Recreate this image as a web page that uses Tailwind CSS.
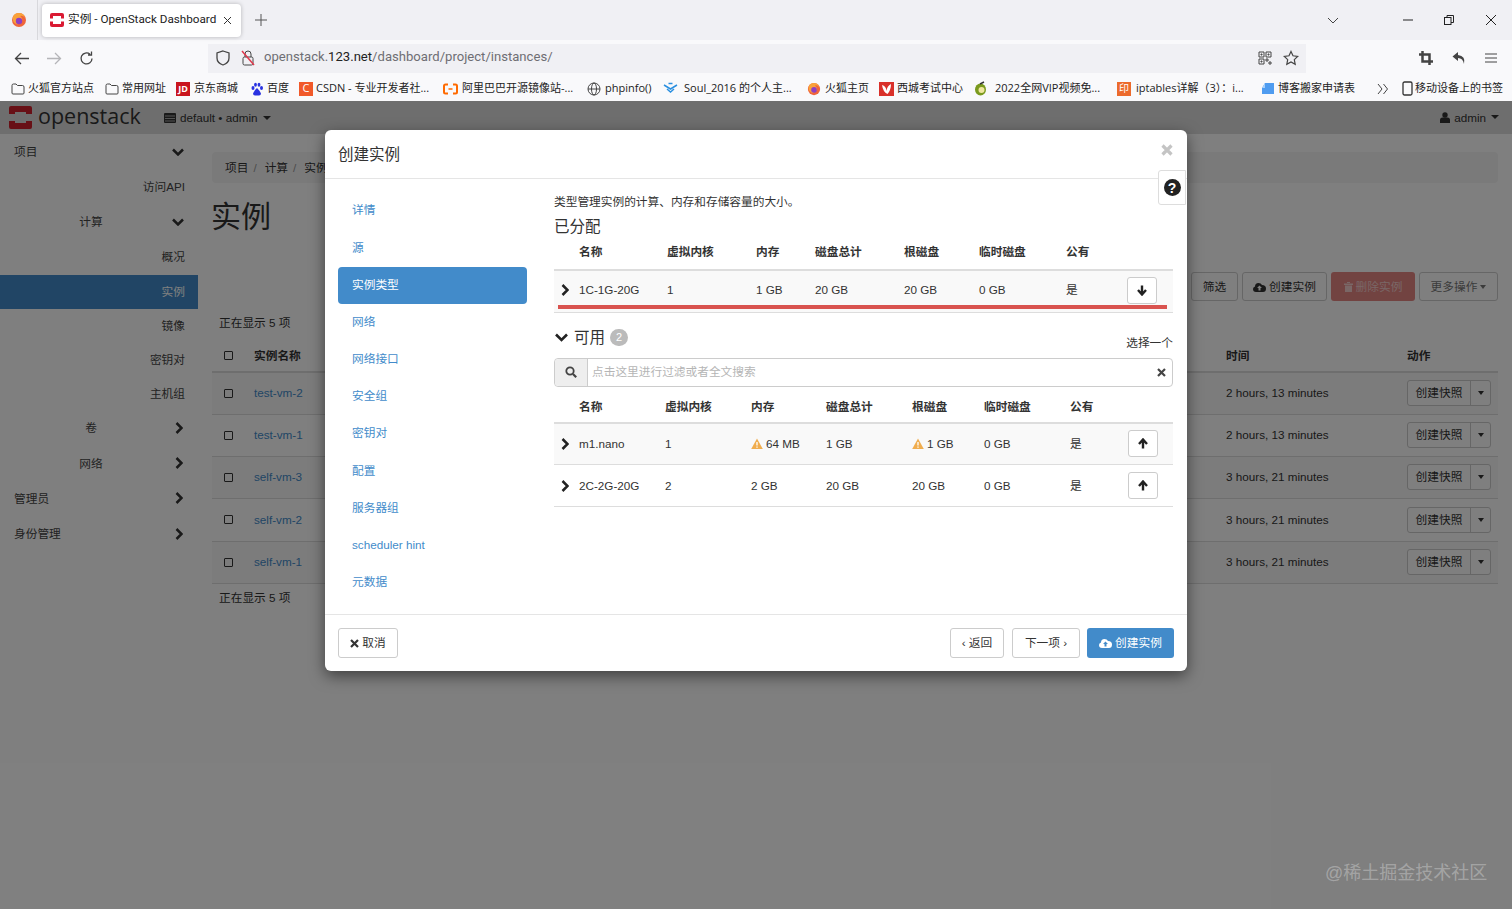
<!DOCTYPE html>
<html lang="zh">
<head>
<meta charset="UTF-8">
<title>实例 - OpenStack Dashboard</title>
<script src="https://cdn.jsdelivr.net/npm/@tailwindcss/browser@4"></script>
</head>
<body class="relative h-[909px] w-[1512px] overflow-hidden bg-white font-['Liberation_Sans','Noto_Sans_CJK_SC',sans-serif] text-[11.700px] text-[#333]">

<!-- browser: tab strip -->
<div class="flex h-[40px] items-center bg-[#f0f0f4] font-['Roboto','Noto_Sans_CJK_SC',sans-serif] text-[#222]">
  <div class="flex w-[38px] justify-center border-r border-[#d8d8dc] h-[40px] items-center">
    <svg width="16" height="16" viewBox="0 0 16 16"><circle cx="8" cy="8" r="7" fill="#f0653a"/><path d="M2 5q1-4 6-4 5 0 6 5-2-3-5-2 3 2 2 5-2 4-6 3-4-2-3-7z" fill="#f9a23a"/><circle cx="8" cy="9" r="3.2" fill="#8f3fc0"/></svg>
  </div>
  <div class="ml-[4px] flex h-[33px] w-[199px] items-center rounded-[4px] bg-white pl-[7px] shadow-[0_0_4px_rgba(0,0,0,0.25)]">
    <svg width="16" height="16" viewBox="0 0 16 16"><rect x="1" y="1" width="14" height="14" rx="2" fill="#da1a32"/><rect x="4" y="4" width="8" height="8" fill="#fff"/><rect x="0" y="6.5" width="5" height="3" fill="#fff"/><rect x="11" y="6.5" width="5" height="3" fill="#fff"/></svg>
    <span class="ml-[3px] w-[150px] whitespace-nowrap text-[11.700px]">实例 - OpenStack Dashboard</span>
    <svg class="ml-[5px]" width="9" height="9" viewBox="0 0 9 9"><path d="M1 1l7 7M8 1L1 8" stroke="#333" fill="none"/></svg>
  </div>
  <svg class="ml-[14px]" width="12" height="12" viewBox="0 0 12 12"><path d="M6 0v12M0 6h12" stroke="#555" fill="none"/></svg>
  <div class="flex-1"></div>
  <svg class="mr-[64px]" width="12" height="7" viewBox="0 0 12 7"><path d="M1 1l5 5 5-5" stroke="#444" fill="none"/></svg>
  <svg class="mr-[31px]" width="10" height="2" viewBox="0 0 10 2"><path d="M0 1h10" stroke="#222" fill="none"/></svg>
  <svg class="mr-[32px]" width="10" height="10" viewBox="0 0 10 10"><rect x="0.5" y="2.5" width="6.5" height="7" stroke="#222" fill="none"/><path d="M3 2.5v-2h6.5v7H7" stroke="#222" fill="none"/></svg>
  <svg class="mr-[16px]" width="10" height="10" viewBox="0 0 10 10"><path d="M0 0l10 10M10 0L0 10" stroke="#222" fill="none"/></svg>
</div>

<!-- browser: nav bar -->
<div class="flex h-[36px] items-center bg-[#f9f9fb] font-['Roboto','Noto_Sans_CJK_SC',sans-serif]">
  <svg class="ml-[14px]" width="15" height="13" viewBox="0 0 15 13"><path d="M7 1L1.5 6.500 7 12M2 6.500h13" stroke="#444" stroke-width="1.300" fill="none"/></svg>
  <svg class="ml-[18px]" width="15" height="13" viewBox="0 0 15 13"><path d="M8 1l5.500 5.500L8 12M13 6.500H0" stroke="#b5b5b8" stroke-width="1.300" fill="none"/></svg>
  <svg class="ml-[17px]" width="15" height="15" viewBox="0 0 15 15"><path d="M13 7.500a5.500 5.500 0 1 1-2-4.300M12.500 0.500v3.500H9" stroke="#444" stroke-width="1.300" fill="none"/></svg>
  <div class="ml-[114px] flex h-[29px] w-[1098px] items-center bg-[#f0f0f4]">
    <svg class="ml-[8px]" width="14" height="16" viewBox="0 0 14 16"><path d="M7 1l6 2v5q0 5-6 7-6-2-6-7V3z" stroke="#444" stroke-width="1.300" fill="none"/></svg>
    <svg class="ml-[11px]" width="14" height="16" viewBox="0 0 14 16"><rect x="2" y="7" width="10" height="8" rx="1.500" stroke="#444" fill="none"/><path d="M4 7V4a3 3 0 0 1 6 0v3" stroke="#444" fill="none"/><path d="M1 1l12 14" stroke="#e0384c" stroke-width="1.500"/></svg>
    <span class="mb-[2px] ml-[9px] text-[13.100px] text-[#6e6e73]">openstack.<span class="text-[#222]">123.net</span>/dashboard/project/instances/</span>
    <div class="flex-1"></div>
    <svg width="14" height="14" viewBox="0 0 14 14"><path d="M1 1h5v5H1zM8 1h5v5H8zM1 8h5v5H1zM8 8h2v2H8zM11 11h2v2h-2zM3 3h1v1H3zM10 3h1v1h-1zM3 10h1v1H3z" stroke="#444" fill="none"/></svg>
    <svg class="ml-[11px] mr-[7px]" width="16" height="16" viewBox="0 0 16 16"><path d="M8 1.500l2 4.300 4.700.6-3.400 3.200.9 4.700L8 11.900l-4.200 2.400.9-4.700L1.300 6.400 6 5.800z" stroke="#444" stroke-width="1.200" fill="none"/></svg>
  </div>
  <svg class="ml-[113px]" width="14" height="14" viewBox="0 0 14 14"><path d="M3.500 0v10.500H14M0 3.500h10.500V14" stroke="#444" stroke-width="2.500" fill="none"/></svg>
  <svg class="ml-[19px]" width="14" height="14" viewBox="0 0 14 14"><path d="M6 1L0.500 5.500 6 10V7q5 0 6 6 2-8-6-9z" fill="#444"/></svg>
  <svg class="ml-[19px]" width="12" height="10" viewBox="0 0 12 10"><path d="M0 1h12M0 5h12M0 9h12" stroke="#444" fill="none"/></svg>
</div>

<!-- browser: bookmarks -->
<div class="flex h-[25px] items-center bg-[#f9f9fb] pl-[11px] font-['Open_Sans','Noto_Sans_CJK_SC',sans-serif] text-[11px] whitespace-nowrap text-[#222]">
  <div class="flex w-[94px] items-center gap-[3px]"><svg width="14" height="12" viewBox="0 0 14 12"><path d="M1 2.500q0-1.500 1.500-1.500H5l1.500 1.500h5q1.500 0 1.500 1.500v6q0 1-1 1H2q-1 0-1-1z" stroke="#444" fill="none"/></svg>火狐官方站点</div>
  <div class="flex w-[71px] items-center gap-[3px]"><svg width="14" height="12" viewBox="0 0 14 12"><path d="M1 2.500q0-1.500 1.500-1.500H5l1.500 1.500h5q1.500 0 1.500 1.500v6q0 1-1 1H2q-1 0-1-1z" stroke="#444" fill="none"/></svg>常用网址</div>
  <div class="flex w-[74px] items-center gap-[4px]"><span class="flex h-[14px] w-[14px] items-center justify-center bg-[#c9151e] text-[9px] font-bold text-white">JD</span>京东商城</div>
  <div class="flex w-[49px] items-center gap-[3px]"><svg width="14" height="14" viewBox="0 0 14 14" fill="#2932e1"><ellipse cx="3" cy="6" rx="1.500" ry="2"/><ellipse cx="5.500" cy="2.800" rx="1.400" ry="2"/><ellipse cx="9" cy="2.800" rx="1.400" ry="2"/><ellipse cx="11.500" cy="6" rx="1.500" ry="2"/><path d="M7 6q3 3 4 5.500 0 2-2 2H5q-2 0-2-2Q4 9 7 6z"/></svg>百度</div>
  <div class="flex w-[144px] items-center gap-[3px]"><span class="flex h-[14px] w-[14px] items-center justify-center bg-[#f1592a] text-[11px] text-white">C</span>CSDN - 专业开发者社...</div>
  <div class="flex w-[144px] items-center gap-[4px]"><svg width="15" height="12" viewBox="0 0 15 12"><path d="M5 1.500H2.500Q1 1.500 1 3v6q0 1.500 1.500 1.500H5M10 1.500h2.500Q14 1.500 14 3v6q0 1.500-1.500 1.500H10" stroke="#ff6a00" stroke-width="2" fill="none"/><path d="M5.500 6h4" stroke="#ff6a00" stroke-width="1.500"/></svg>阿里巴巴开源镜像站-...</div>
  <div class="flex w-[76px] items-center gap-[4px]"><svg width="14" height="14" viewBox="0 0 14 14" stroke="#444" fill="none"><circle cx="7" cy="7" r="6"/><ellipse cx="7" cy="7" rx="2.500" ry="6"/><path d="M1 7h12"/></svg>phpinfo()</div>
  <div class="flex w-[144px] items-center gap-[6px]"><svg width="15" height="13" viewBox="0 0 15 13" fill="none" stroke="#2a8fe0" stroke-width="1.500"><path d="M1 3l6.500 4L14 3"/><path d="M4 7l3.500 3L11 7"/><path d="M5.500 1.500h4"/></svg>Soul_2016 的个人主...</div>
  <div class="flex w-[72px] items-center gap-[4px]"><svg width="14" height="14" viewBox="0 0 16 16"><circle cx="8" cy="8" r="7" fill="#f0653a"/><path d="M2 5q1-4 6-4 5 0 6 5-2-3-5-2 3 2 2 5-2 4-6 3-4-2-3-7z" fill="#f9a23a"/><circle cx="8" cy="9" r="3.200" fill="#8f3fc0"/></svg>火狐主页</div>
  <div class="flex w-[94px] items-center gap-[3px]"><svg width="15" height="14" viewBox="0 0 15 14"><rect width="15" height="14" fill="#d9302a"/><path d="M3 3q4 1 4.500 6Q8 4 12 2q0 6-3.500 10Q4 10 3 3z" fill="#fff"/></svg>西城考试中心</div>
  <div class="flex w-[144px] items-center gap-[7px]"><svg width="15" height="15" viewBox="0 0 15 15"><ellipse cx="7.500" cy="8.500" rx="5.500" ry="6" fill="#7a9a1e"/><circle cx="8.500" cy="9" r="3" fill="#f0e6a0"/><path d="M7 3l4-2" stroke="#333" stroke-width="1.500"/></svg>2022全网VIP视频免...</div>
  <div class="flex w-[144px] items-center gap-[5px]"><span class="flex h-[14px] w-[14px] items-center justify-center bg-[#ec6a2c] text-[10px] text-white">印</span>iptables详解（3）：i...</div>
  <div class="flex w-[114px] items-center gap-[3px]"><svg width="14" height="13" viewBox="0 0 14 13"><path d="M4 1h9v11H1V6z" fill="#4f9cf0"/><path d="M1 6l3-5v5z" fill="#a8d0fa"/></svg>博客搬家申请表</div>
  <svg class="ml-[2px] mr-[13px]" width="12" height="10" viewBox="0 0 12 10" fill="none" stroke="#444"><path d="M1 0l4 5-4 5M6.500 0l4 5-4 5"/></svg>
  <div class="flex items-center gap-[2px]"><svg width="11" height="15" viewBox="0 0 11 15"><rect x="1" y="1" width="9" height="13" rx="1.500" stroke="#333" stroke-width="1.300" fill="none"/></svg>移动设备上的书签</div>
</div>

<!-- dashboard behind the dialog -->
<div class="flex h-[33px] items-center justify-between bg-[#dcdcdc] pl-[8px] pr-[13px]">
  <div class="flex items-center">
    <svg width="25" height="25" viewBox="0 0 25 25"><path d="M3 1h19q2 0 2 2v6h-6V7H7v2H1V3q0-2 2-2zM1 16h6v2h11v-2h6v6q0 2-2 2H3q-2 0-2-2z" fill="#d0202c"/></svg>
    <span class="mb-[3px] ml-[5px] w-[103px] font-['Open_Sans',sans-serif] text-[21.500px] leading-none text-[#333]">openstack</span>
    <svg class="ml-[23px]" width="12" height="10" viewBox="0 0 12 10"><rect width="12" height="10" rx="1" fill="#333"/><path d="M1 3h10M1 5.500h10M1 8h10" stroke="#dcdcdc" stroke-width=".7"/></svg>
    <span class="ml-[4px]">default • admin</span>
    <span class="ml-[5px] h-0 w-0 border-x-[4px] border-t-[4px] border-x-transparent border-t-[#333]"></span>
  </div>
  <div class="flex items-center">
    <svg width="10" height="11" viewBox="0 0 10 11" fill="#333"><circle cx="5" cy="3" r="2.700"/><path d="M0 11V8q0-2.500 2.500-2.500h5Q10 5.500 10 8v3z"/></svg>
    <span class="ml-[4px]">admin</span>
    <span class="ml-[5px] h-0 w-0 border-x-[4px] border-t-[4px] border-x-transparent border-t-[#333]"></span>
  </div>
</div>
<div class="flex">
  <aside class="w-[198px] shrink-0 pt-[0.500px] text-[#444]">
    <div class="flex h-[35px] items-center justify-between pl-[14px] pr-[14px]">项目<svg width="12" height="8" viewBox="0 0 12 8"><path d="M1 1.500l5 5 5-5" stroke="#333" stroke-width="2.500" fill="none"/></svg></div>
    <div class="flex h-[35px] items-center justify-end pr-[13px]">访问API</div>
    <div class="flex h-[35px] items-center justify-between pl-[14px] pr-[14px]"><span class="w-[154px] text-center">计算</span><svg width="12" height="8" viewBox="0 0 12 8"><path d="M1 1.500l5 5 5-5" stroke="#333" stroke-width="2.500" fill="none"/></svg></div>
    <div class="flex h-[35px] items-center justify-end pr-[13px]">概况</div>
    <div class="flex h-[34px] items-center justify-end bg-[#428bca] pr-[13px] text-white">实例</div>
    <div class="flex h-[34px] items-center justify-end pr-[13px]">镜像</div>
    <div class="flex h-[34px] items-center justify-end pr-[13px]">密钥对</div>
    <div class="flex h-[34px] items-center justify-end pr-[13px]">主机组</div>
    <div class="flex h-[35.200px] items-center justify-between pl-[14px] pr-[15px]"><span class="w-[154px] text-center">卷</span><svg width="8" height="12" viewBox="0 0 8 12"><path d="M1.500 1l5 5-5 5" stroke="#333" stroke-width="2.500" fill="none"/></svg></div>
    <div class="flex h-[35.200px] items-center justify-between pl-[14px] pr-[15px]"><span class="w-[154px] text-center">网络</span><svg width="8" height="12" viewBox="0 0 8 12"><path d="M1.500 1l5 5-5 5" stroke="#333" stroke-width="2.500" fill="none"/></svg></div>
    <div class="flex h-[35.200px] items-center justify-between pl-[14px] pr-[15px]">管理员<svg width="8" height="12" viewBox="0 0 8 12"><path d="M1.500 1l5 5-5 5" stroke="#333" stroke-width="2.500" fill="none"/></svg></div>
    <div class="flex h-[35.200px] items-center justify-between pl-[14px] pr-[15px]">身份管理<svg width="8" height="12" viewBox="0 0 8 12"><path d="M1.500 1l5 5-5 5" stroke="#333" stroke-width="2.500" fill="none"/></svg></div>
  </aside>
  <main class="ml-[14px] w-[1286px]">
    <div class="mt-[18px] flex h-[31px] items-center gap-[5px] rounded-[4px] bg-[#f5f5f5] px-[13px] text-[#333]">项目 <span class="text-[#999]">/</span> <span class="ml-[3px]">计算</span> <span class="text-[#999]">/</span> <span class="ml-[3px]">实例</span></div>
    <h1 class="mt-[14px] -ml-[1px] h-[40px] text-[30px] leading-[40px] text-[#333]">实例</h1>
    <div class="mt-[35px] flex h-[29px] justify-end gap-[4px]">
      <span class="flex w-[47px] items-center justify-center rounded-[3px] border border-[#ccc] bg-white">筛选</span>
      <span class="flex w-[85px] items-center justify-center gap-[3px] rounded-[3px] border border-[#ccc] bg-white"><svg width="13" height="10" viewBox="0 0 13 10"><path d="M3 10Q0 10 0 7q0-2 2-2.500Q2 1 5.500 1 8 1 9 3q4 0 4 3.500Q13 10 10 10z" fill="#333"/><path d="M6.500 3.500L4 6h1.500v2.500h2V6H9z" fill="#fff"/></svg>创建实例</span>
      <span class="flex w-[84px] items-center justify-center gap-[3px] rounded-[3px] bg-[#d9534f]/70 text-white/60"><svg width="9" height="10" viewBox="0 0 9 10" fill="currentColor"><path d="M0 1.500h9V3H0zM1 3.500h7V10H1zM3 0h3v1H3z"/></svg>删除实例</span>
      <span class="flex w-[79px] items-center justify-center gap-[3px] rounded-[3px] border border-[#ccc] bg-white text-[#777]">更多操作<span class="h-0 w-0 border-x-[3.500px] border-t-[4px] border-x-transparent border-t-[#777]"></span></span>
    </div>
    <div class="mt-[12px] h-[20px] pl-[7px] leading-[20px]">正在显示 5 项</div>
    <table class="mt-[7px] w-full table-fixed">
      <colgroup><col class="w-[42px]"><col class="w-[972px]"><col class="w-[181px]"><col></colgroup>
      <thead><tr class="h-[32px] border-b-2 border-[#ddd] font-bold"><td class="pl-[12px]"><span class="block h-[9px] w-[9px] rounded-[1px] border border-[#333]"></span></td><td>实例名称</td><td>时间</td><td>动作</td></tr></thead>
      <tbody>
        <tr class="h-[42px] border-b border-[#ddd] bg-[#f9f9f9]"><td class="pl-[12px]"><span class="block h-[9px] w-[9px] rounded-[1px] border border-[#333]"></span></td><td class="text-[#428bca]">test-vm-2</td><td>2 hours, 13 minutes</td><td><div class="flex h-[26px] w-[84px] rounded-[3px] border border-[#ccc] bg-white"><span class="flex w-[62px] items-center justify-center">创建快照</span><span class="flex flex-1 items-center justify-center border-l border-[#ccc]"><span class="h-0 w-0 border-x-[3.500px] border-t-[4px] border-x-transparent border-t-[#333]"></span></span></div></td></tr>
        <tr class="h-[42px] border-b border-[#ddd]"><td class="pl-[12px]"><span class="block h-[9px] w-[9px] rounded-[1px] border border-[#333]"></span></td><td class="text-[#428bca]">test-vm-1</td><td>2 hours, 13 minutes</td><td><div class="flex h-[26px] w-[84px] rounded-[3px] border border-[#ccc] bg-white"><span class="flex w-[62px] items-center justify-center">创建快照</span><span class="flex flex-1 items-center justify-center border-l border-[#ccc]"><span class="h-0 w-0 border-x-[3.500px] border-t-[4px] border-x-transparent border-t-[#333]"></span></span></div></td></tr>
        <tr class="h-[42px] border-b border-[#ddd] bg-[#f9f9f9]"><td class="pl-[12px]"><span class="block h-[9px] w-[9px] rounded-[1px] border border-[#333]"></span></td><td class="text-[#428bca]">self-vm-3</td><td>3 hours, 21 minutes</td><td><div class="flex h-[26px] w-[84px] rounded-[3px] border border-[#ccc] bg-white"><span class="flex w-[62px] items-center justify-center">创建快照</span><span class="flex flex-1 items-center justify-center border-l border-[#ccc]"><span class="h-0 w-0 border-x-[3.500px] border-t-[4px] border-x-transparent border-t-[#333]"></span></span></div></td></tr>
        <tr class="h-[43px] border-b border-[#ddd]"><td class="pl-[12px]"><span class="block h-[9px] w-[9px] rounded-[1px] border border-[#333]"></span></td><td class="text-[#428bca]">self-vm-2</td><td>3 hours, 21 minutes</td><td><div class="flex h-[26px] w-[84px] rounded-[3px] border border-[#ccc] bg-white"><span class="flex w-[62px] items-center justify-center">创建快照</span><span class="flex flex-1 items-center justify-center border-l border-[#ccc]"><span class="h-0 w-0 border-x-[3.500px] border-t-[4px] border-x-transparent border-t-[#333]"></span></span></div></td></tr>
        <tr class="h-[42px] border-b border-[#ddd] bg-[#f9f9f9]"><td class="pl-[12px]"><span class="block h-[9px] w-[9px] rounded-[1px] border border-[#333]"></span></td><td class="text-[#428bca]">self-vm-1</td><td>3 hours, 21 minutes</td><td><div class="flex h-[26px] w-[84px] rounded-[3px] border border-[#ccc] bg-white"><span class="flex w-[62px] items-center justify-center">创建快照</span><span class="flex flex-1 items-center justify-center border-l border-[#ccc]"><span class="h-0 w-0 border-x-[3.500px] border-t-[4px] border-x-transparent border-t-[#333]"></span></span></div></td></tr>
      </tbody>
    </table>
    <div class="mt-[4px] h-[20px] pl-[7px] leading-[20px]">正在显示 5 项</div>
  </main>
</div>

<!-- backdrop -->
<div class="absolute inset-x-0 bottom-0 top-[101px] bg-black/50"></div>

<!-- dialog -->
<div class="absolute left-[325px] top-[130px] flex h-[541px] w-[862px] flex-col rounded-[6px] bg-white shadow-[0_5px_15px_rgba(0,0,0,0.5)]">
  <div class="flex h-[49px] shrink-0 items-center border-b border-[#e5e5e5] pl-[13px] pt-[1px] text-[15.500px] text-[#333]">创建实例</div>
  <svg class="absolute left-[836px] top-[14px]" width="12" height="12" viewBox="0 0 12 12"><path d="M1.500 1.500l9 9M10.500 1.500l-9 9" stroke="#c4c4c4" stroke-width="3.200" fill="none"/></svg>
  <div class="absolute left-[833px] top-[40px] flex h-[35px] w-[28px] items-center justify-center rounded-l-[3px] border border-[#ddd] bg-white">
    <span class="flex h-[17px] w-[17px] items-center justify-center rounded-full bg-[#222] text-[14px] font-bold leading-none text-white">?</span>
  </div>

  <div class="flex flex-1">
    <nav class="w-[229px] shrink-0 pl-[13px] pt-[13.500px] text-[#428bca]">
      <div class="flex h-[37.300px] w-[189px] items-center pb-[2px] pl-[14px]">详情</div>
      <div class="flex h-[37.300px] w-[189px] items-center pb-[2px] pl-[14px]">源</div>
      <div class="flex h-[36.500px] w-[189px] items-center rounded-[4px] bg-[#428bca] pb-[2px] pl-[14px] text-white">实例类型</div>
      <div class="mt-[0.800px] flex h-[37.100px] w-[189px] items-center pb-[2px] pl-[14px]">网络</div>
      <div class="flex h-[37.100px] w-[189px] items-center pb-[2px] pl-[14px]">网络接口</div>
      <div class="flex h-[37.100px] w-[189px] items-center pb-[2px] pl-[14px]">安全组</div>
      <div class="flex h-[37.100px] w-[189px] items-center pb-[2px] pl-[14px]">密钥对</div>
      <div class="flex h-[37.100px] w-[189px] items-center pb-[2px] pl-[14px]">配置</div>
      <div class="flex h-[37.100px] w-[189px] items-center pb-[2px] pl-[14px]">服务器组</div>
      <div class="flex h-[37.100px] w-[189px] items-center pb-[2px] pl-[14px]">scheduler hint</div>
      <div class="flex h-[37.100px] w-[189px] items-center pb-[2px] pl-[14px]">元数据</div>
    </nav>

    <section class="w-[619px] pt-[13px]">
      <p class="h-[20px] leading-[20px]">类型管理实例的计算、内存和存储容量的大小。</p>
      <h4 class="mt-[5px] h-[20px] text-[15.500px] leading-[20px]">已分配</h4>

      <div class="relative">
        <table class="w-full table-fixed">
          <colgroup><col class="w-[25px]"><col class="w-[88px]"><col class="w-[89px]"><col class="w-[59px]"><col class="w-[89px]"><col class="w-[75px]"><col class="w-[87px]"><col></colgroup>
          <thead><tr class="h-[33px] border-b-2 border-[#ddd] font-bold [&>td]:pb-[2px]"><td></td><td>名称</td><td>虚拟内核</td><td>内存</td><td>磁盘总计</td><td>根磁盘</td><td>临时磁盘</td><td>公有</td></tr></thead>
          <tbody><tr class="h-[42px] border-b border-[#ddd] bg-[#f9f9f9] [&>td]:pb-[2px]">
            <td class="pl-[7px]"><svg width="8" height="12" viewBox="0 0 8 12"><path d="M1.500 1l5 5-5 5" stroke="#222" stroke-width="2.500" fill="none"/></svg></td>
            <td>1C-1G-20G</td><td>1</td><td>1 GB</td><td>20 GB</td><td>20 GB</td><td>0 GB</td><td>是</td>
            <td></td>
          </tr></tbody>
        </table>
        <div class="absolute left-[4px] top-[68px] h-[3.500px] w-[609px] bg-[#d9534f]"></div>
        <span class="absolute left-[573px] top-[40px] flex h-[27px] w-[30px] items-center justify-center rounded-[3px] border border-[#ccc] bg-white"><svg width="10" height="11" viewBox="0 0 10 11"><path d="M5 0.500v8M1 5l4 4.500L9 5" stroke="#222" stroke-width="2.400" fill="none"/></svg></span>
      </div>

      <div class="mt-[14px] flex h-[22px] items-center">
        <svg class="ml-[1px]" width="13" height="9" viewBox="0 0 13 9"><path d="M1 1.500l5.500 5.500L12 1.500" stroke="#222" stroke-width="2.600" fill="none"/></svg>
        <span class="ml-[6px] text-[15.500px] leading-none">可用</span>
        <span class="ml-[5px] flex h-[17px] w-[18px] items-center justify-center rounded-full bg-[#bbb] text-[11px] text-white">2</span>
        <span class="ml-auto mt-[10px]">选择一个</span>
      </div>
      <div class="mt-[9px] flex h-[29px] rounded-[4px] border border-[#ccc]">
        <span class="flex w-[33px] items-center justify-center rounded-l-[4px] border-r border-[#ccc] bg-[#eee]"><svg width="12" height="12" viewBox="0 0 12 12"><circle cx="5" cy="5" r="3.700" stroke="#444" stroke-width="1.800" fill="none"/><path d="M8 8l3.200 3.200" stroke="#444" stroke-width="2.200"/></svg></span>
        <span class="flex flex-1 items-center pl-[4px] text-[#b5b5b5]">点击这里进行过滤或者全文搜索</span>
        <svg class="mr-[6px] self-center" width="9" height="9" viewBox="0 0 9 9"><path d="M1 1l7 7M8 1L1 8" stroke="#444" stroke-width="2.200" fill="none"/></svg>
      </div>

      <table class="w-full table-fixed">
        <colgroup><col class="w-[25px]"><col class="w-[86px]"><col class="w-[86px]"><col class="w-[75px]"><col class="w-[86px]"><col class="w-[72px]"><col class="w-[86px]"><col class="w-[58px]"><col></colgroup>
        <thead><tr class="h-[36px] border-b-2 border-[#ddd] font-bold [&>td]:pt-[5px]"><td></td><td>名称</td><td>虚拟内核</td><td>内存</td><td>磁盘总计</td><td>根磁盘</td><td>临时磁盘</td><td>公有</td><td></td></tr></thead>
        <tbody>
          <tr class="h-[42px] border-b border-[#ddd] bg-[#f9f9f9]">
            <td class="pl-[7px]"><svg width="8" height="12" viewBox="0 0 8 12"><path d="M1.500 1l5 5-5 5" stroke="#222" stroke-width="2.500" fill="none"/></svg></td>
            <td>m1.nano</td><td>1</td>
            <td><span class="flex items-center gap-[3px]"><svg width="12" height="11" viewBox="0 0 12 11"><path d="M6 0.500L11.800 11H0.200z" fill="#f0ad4e"/><path d="M6 4v3.500M6 8.500v1.200" stroke="#fff" stroke-width="1.300"/></svg>64 MB</span></td>
            <td>1 GB</td>
            <td><span class="flex items-center gap-[3px]"><svg width="12" height="11" viewBox="0 0 12 11"><path d="M6 0.500L11.800 11H0.200z" fill="#f0ad4e"/><path d="M6 4v3.500M6 8.500v1.200" stroke="#fff" stroke-width="1.300"/></svg>1 GB</span></td>
            <td>0 GB</td><td>是</td>
            <td><span class="flex h-[27px] w-[30px] items-center justify-center rounded-[3px] border border-[#ccc] bg-white"><svg width="10" height="11" viewBox="0 0 10 11"><path d="M5 10.500v-8M1 6l4-4.500L9 6" stroke="#222" stroke-width="2.400" fill="none"/></svg></span></td>
          </tr>
          <tr class="h-[42px] border-b border-[#ddd]">
            <td class="pl-[7px]"><svg width="8" height="12" viewBox="0 0 8 12"><path d="M1.500 1l5 5-5 5" stroke="#222" stroke-width="2.500" fill="none"/></svg></td>
            <td>2C-2G-20G</td><td>2</td><td>2 GB</td><td>20 GB</td><td>20 GB</td><td>0 GB</td><td>是</td>
            <td><span class="flex h-[27px] w-[30px] items-center justify-center rounded-[3px] border border-[#ccc] bg-white"><svg width="10" height="11" viewBox="0 0 10 11"><path d="M5 10.500v-8M1 6l4-4.500L9 6" stroke="#222" stroke-width="2.400" fill="none"/></svg></span></td>
          </tr>
        </tbody>
      </table>
    </section>
  </div>

  <div class="flex h-[57px] shrink-0 items-center border-t border-[#e5e5e5] px-[13px]">
    <span class="flex h-[30px] w-[60px] items-center justify-center gap-[3px] rounded-[3px] border border-[#ccc] bg-white"><svg width="9" height="9" viewBox="0 0 9 9"><path d="M1 1l7 7M8 1L1 8" stroke="#333" stroke-width="2.200" fill="none"/></svg>取消</span>
    <span class="ml-auto flex h-[30px] w-[54px] items-center justify-center gap-[3px] rounded-[3px] border border-[#ccc] bg-white">‹ 返回</span>
    <span class="ml-[8px] flex h-[30px] w-[68px] items-center justify-center gap-[3px] rounded-[3px] border border-[#ccc] bg-white">下一项 ›</span>
    <span class="ml-[7px] flex h-[30px] w-[87px] items-center justify-center gap-[3px] rounded-[3px] bg-[#428bca] text-white"><svg width="13" height="10" viewBox="0 0 13 10"><path d="M3 10Q0 10 0 7q0-2 2-2.500Q2 1 5.500 1 8 1 9 3q4 0 4 3.500Q13 10 10 10z" fill="#fff"/><path d="M6.500 3.500L4 6h1.500v2.500h2V6H9z" fill="#428bca"/></svg>创建实例</span>
  </div>
</div>

<!-- watermark -->
<div class="absolute left-[1325px] top-[861px] text-[18px] leading-[24px] whitespace-nowrap text-white/30">@稀土掘金技术社区</div>

</body>
</html>
